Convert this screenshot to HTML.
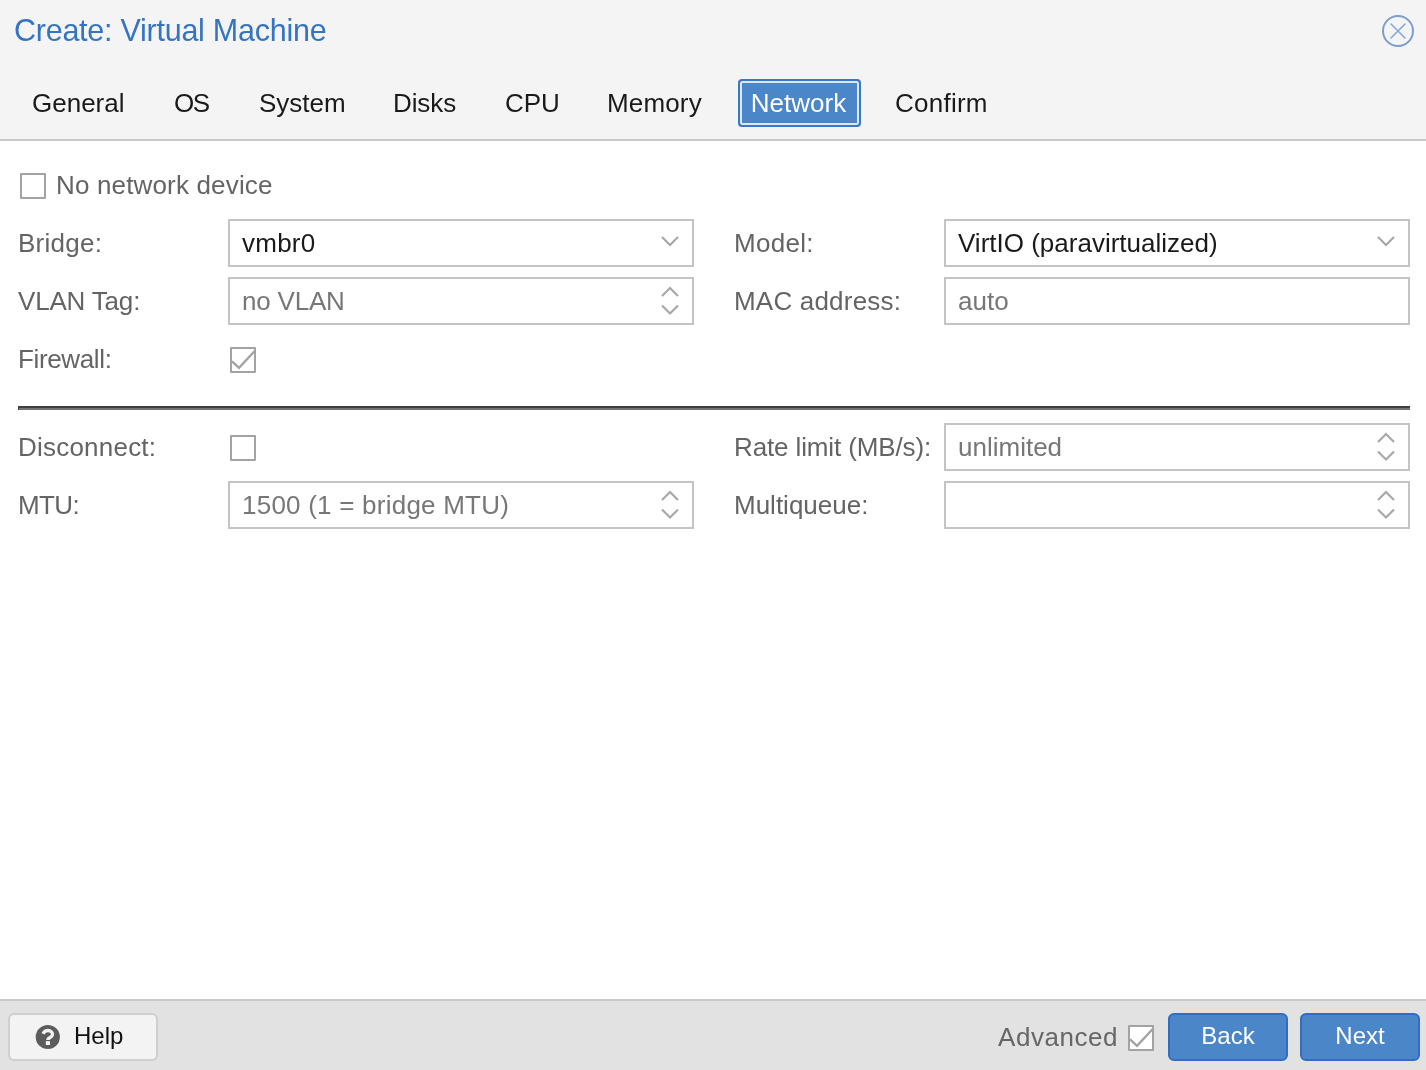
<!DOCTYPE html>
<html><head><meta charset="utf-8">
<style>
*{margin:0;padding:0;box-sizing:border-box}
html,body{width:1426px;height:1070px;overflow:hidden;background:#fff;font-family:"Liberation Sans",sans-serif}
.abs{position:absolute}
#hdr{position:absolute;left:0;top:0;width:1426px;height:141px;background:#f4f4f4;border-bottom:2px solid #c9c9c9}
#title{position:absolute;left:14px;top:10px;font-size:30.5px;line-height:40px;color:#3574c3;white-space:nowrap;letter-spacing:-0.25px}
.tab{position:absolute;top:79px;height:48px;font-size:26px;line-height:48px;color:#1a1a1a;white-space:nowrap}
.tab.act{background:#4a86c8;color:#fff;border:2px solid #3878c6;border-radius:4px;box-shadow:inset 0 0 0 2px #dbe7f4;line-height:44px;text-align:center}
.lbl{position:absolute;font-size:26px;color:#646464;white-space:nowrap;line-height:48px}
.fld{position:absolute;height:48px;border:2px solid #c4c4c4;background:#fff}
.fld span{position:absolute;left:12px;top:0;font-size:26px;line-height:44px;white-space:nowrap}
.val{color:#1a1a1a}
.ph{color:#777}
.cb{position:absolute;width:26px;height:26px;border:2px solid #a3a3a3;border-radius:1px;background:#fff}
#ftr{position:absolute;left:0;top:999px;width:1426px;height:71px;background:#e2e2e2;border-top:2px solid #c8c8c8}
.btn{position:absolute;top:1013px;height:48px;border-radius:6px;font-size:24px;line-height:42px;text-align:center;white-space:nowrap}
.btn.blue{background:#4a86c8;border:2px solid #316dc0;color:#fff}
</style></head><body><div id="root" style="position:absolute;left:0;top:0;width:1426px;height:1070px;background:#fff;will-change:transform">
<div id="hdr">
  <div id="title">Create: Virtual Machine</div>
  <svg class="abs" style="left:1380px;top:13px" width="36" height="36" viewBox="0 0 36 36">
    <circle cx="18" cy="18" r="15" fill="none" stroke="#7b9fcc" stroke-width="2"/>
    <path d="M11 11 L25 25 M25 11 L11 25" stroke="#86a9dc" stroke-width="1.6" stroke-linecap="round"/>
  </svg>
  <div class="tab" style="left:32px">General</div>
  <div class="tab" style="left:174px;letter-spacing:-1.5px">OS</div>
  <div class="tab" style="left:259px">System</div>
  <div class="tab" style="left:393px;letter-spacing:-0.1px">Disks</div>
  <div class="tab" style="left:505px">CPU</div>
  <div class="tab" style="left:607px;letter-spacing:0.15px">Memory</div>
  <div class="tab act" style="left:738px;width:123px;text-indent:-2px">Network</div>
  <div class="tab" style="left:895px;letter-spacing:0.25px">Confirm</div>
</div>

<!-- row 0 -->
<div class="cb" style="left:20px;top:173px"></div>
<div class="lbl" style="left:56px;top:161px;letter-spacing:0.16px">No network device</div>

<!-- left column -->
<div class="lbl" style="left:18px;top:219px;letter-spacing:0.28px">Bridge:</div>
<div class="fld" style="left:228px;top:219px;width:466px"><span class="val" style="letter-spacing:0.25px">vmbr0</span>
  <svg class="abs" style="left:430px;top:13px" width="20" height="14" viewBox="0 0 20 14"><path d="M2 3 L10 11 L18 3" fill="none" stroke="#a8a8a8" stroke-width="2.2"/></svg>
</div>
<div class="lbl" style="left:18px;top:277px;letter-spacing:-0.18px">VLAN Tag:</div>
<div class="fld" style="left:228px;top:277px;width:466px"><span class="ph" style="letter-spacing:-0.2px">no VLAN</span>
  <svg class="abs" style="left:430px;top:5px" width="20" height="36" viewBox="0 0 20 36"><path d="M2 12 L10 4 L18 12 M2 21.5 L10 29.5 L18 21.5" fill="none" stroke="#a8a8a8" stroke-width="2.2"/></svg>
</div>
<div class="lbl" style="left:18px;top:335px;letter-spacing:-0.36px">Firewall:</div>
<div class="cb" style="left:230px;top:347px">
  <svg class="abs" style="left:-2px;top:-2px" width="26" height="26" viewBox="0 0 26 26"><path d="M2 14.3 L9 20.8 L24.5 4.3" fill="none" stroke="#a3a3a3" stroke-width="2.4"/></svg>
</div>

<!-- right column -->
<div class="lbl" style="left:734px;top:219px;letter-spacing:0.28px">Model:</div>
<div class="fld" style="left:944px;top:219px;width:466px"><span class="val">VirtIO (paravirtualized)</span>
  <svg class="abs" style="left:430px;top:13px" width="20" height="14" viewBox="0 0 20 14"><path d="M2 3 L10 11 L18 3" fill="none" stroke="#a8a8a8" stroke-width="2.2"/></svg>
</div>
<div class="lbl" style="left:734px;top:277px;letter-spacing:0.2px">MAC address:</div>
<div class="fld" style="left:944px;top:277px;width:466px"><span class="ph">auto</span></div>

<!-- separator -->
<div class="abs" style="left:18px;top:406px;width:1392px;height:4px;background:linear-gradient(#404040 0,#404040 2px,#737373 2px,#737373 4px);border-left:1px solid #404040"></div>

<!-- advanced -->
<div class="lbl" style="left:18px;top:423px;letter-spacing:0.22px">Disconnect:</div>
<div class="cb" style="left:230px;top:435px"></div>
<div class="lbl" style="left:18px;top:481px;letter-spacing:-0.6px">MTU:</div>
<div class="fld" style="left:228px;top:481px;width:466px"><span class="ph" style="letter-spacing:0.23px">1500 (1 = bridge MTU)</span>
  <svg class="abs" style="left:430px;top:5px" width="20" height="36" viewBox="0 0 20 36"><path d="M2 12 L10 4 L18 12 M2 21.5 L10 29.5 L18 21.5" fill="none" stroke="#a8a8a8" stroke-width="2.2"/></svg>
</div>
<div class="lbl" style="left:734px;top:423px;letter-spacing:-0.13px">Rate limit (MB/s):</div>
<div class="fld" style="left:944px;top:423px;width:466px"><span class="ph">unlimited</span>
  <svg class="abs" style="left:430px;top:5px" width="20" height="36" viewBox="0 0 20 36"><path d="M2 12 L10 4 L18 12 M2 21.5 L10 29.5 L18 21.5" fill="none" stroke="#a8a8a8" stroke-width="2.2"/></svg>
</div>
<div class="lbl" style="left:734px;top:481px">Multiqueue:</div>
<div class="fld" style="left:944px;top:481px;width:466px">
  <svg class="abs" style="left:430px;top:5px" width="20" height="36" viewBox="0 0 20 36"><path d="M2 12 L10 4 L18 12 M2 21.5 L10 29.5 L18 21.5" fill="none" stroke="#a8a8a8" stroke-width="2.2"/></svg>
</div>

<!-- footer -->
<div id="ftr"></div>
<div class="btn" style="left:8px;width:150px;background:#f3f3f3;border:2px solid #cfcfcf;color:#111">
  <svg class="abs" style="left:20px;top:5px" width="36" height="34" viewBox="0 0 36 34"><circle cx="17.8" cy="17" r="12.1" fill="#5c5c5c"/><path d="M13.0 13.7 C14.0 11.9 15.7 10.5 18 10.5 C20.8 10.5 22.5 12.3 22.5 14.3 C22.5 16.3 21.0 17.0 19.8 17.7 C18.6 18.4 17.9 18.8 17.9 19.6 L17.9 20.1" fill="none" stroke="#f2f2f2" stroke-width="3.3"/><rect x="15.8" y="21.1" width="4.2" height="3.9" fill="#f2f2f2"/></svg>
  <span class="abs" style="left:64px;top:0px">Help</span>
</div>
<div class="lbl" style="left:998px;top:1013px;color:#666;letter-spacing:0.55px">Advanced</div>
<div class="cb" style="left:1128px;top:1025px">
  <svg class="abs" style="left:-2px;top:-2px" width="26" height="26" viewBox="0 0 26 26"><path d="M2 14.3 L9 20.8 L24.5 4.3" fill="none" stroke="#a3a3a3" stroke-width="2.4"/></svg>
</div>
<div class="btn blue" style="left:1168px;width:120px">Back</div>
<div class="btn blue" style="left:1300px;width:120px">Next</div>
</div></body></html>
